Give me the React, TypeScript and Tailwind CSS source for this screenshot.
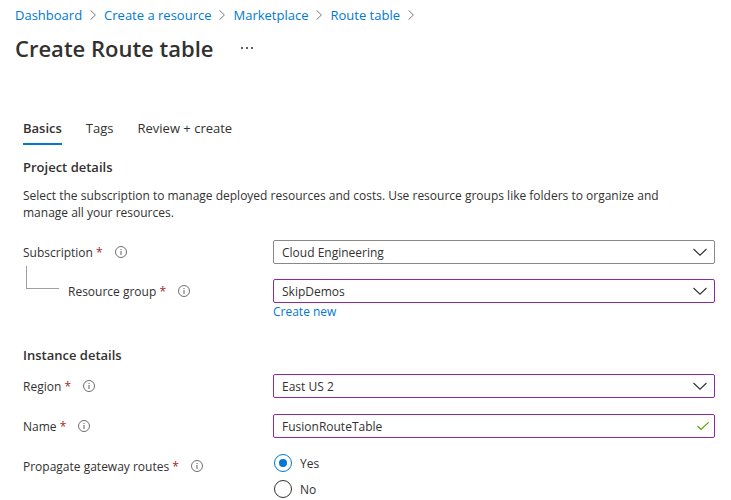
import React, { useState } from "react";

const crumbs = ["Dashboard", "Create a resource", "Marketplace", "Route table"];
const tabs = ["Basics", "Tags", "Review + create"];

function InfoIcon() {
  return (
    <svg className="size-3 shrink-0" viewBox="0 0 12 12" fill="none" stroke="#605e5c" aria-hidden="true">
      <circle cx="6" cy="6" r="5.5" strokeWidth="0.9" />
      <path d="M6 5v4M6 3v1" strokeWidth="1" />
    </svg>
  );
}

function Label({ text, htmlFor, id }: { text: string; htmlFor?: string; id?: string }) {
  const content = (
    <>
      {text} <span className="text-[#a4262c]">*</span>
    </>
  );
  return (
    <div className="flex h-6 items-center gap-3">
      {htmlFor ? <label htmlFor={htmlFor}>{content}</label> : <span id={id}>{content}</span>}
      <InfoIcon />
    </div>
  );
}

function Row({ children }: { children: React.ReactNode }) {
  return <div className="grid grid-cols-[250px_minmax(0,1fr)] items-start">{children}</div>;
}

function Select({ id, value, changed }: { id: string; value: string; changed?: boolean }) {
  return (
    <div className="relative">
      <select
        id={id}
        defaultValue={value}
        className={
          "block h-6 w-full appearance-none rounded-xs border bg-white pt-px pr-8 pl-2 leading-5 outline-none " +
          (changed ? "border-[#8a2da5]" : "border-[#8a8886]")
        }
      >
        <option>{value}</option>
      </select>
      <svg
        className="pointer-events-none absolute top-2 right-2 h-2 w-3.5"
        viewBox="0 0 14 8"
        fill="none"
        stroke="#323130"
        aria-hidden="true"
      >
        <path d="M0.5 1L7 7.2L13.5 1" strokeWidth="1.1" />
      </svg>
    </div>
  );
}

export default function App() {
  const [route, setRoute] = useState("Yes");
  return (
    <main className="bg-white pt-[5px] font-['Open_Sans','Noto_Sans',sans-serif] text-[12px] leading-[17px] text-[#323130]">
      <nav aria-label="Breadcrumb" className="flex h-5 items-center gap-2 px-[15px] text-[13px]">
        {crumbs.map((c) => (
          <React.Fragment key={c}>
            <a href="#" className="text-[#0078d4]">
              {c}
            </a>
            <svg className="h-2.5 w-1.5" viewBox="0 0 6 10" fill="none" stroke="#797775" aria-hidden="true">
              <path d="M0.5 0.3L5.4 5L0.5 9.7" strokeWidth="1" />
            </svg>
          </React.Fragment>
        ))}
      </nav>
      <header className="mt-[7px] flex h-8 items-center gap-7 px-[15px]">
        <h1 className="text-[22px] leading-8 font-semibold">Create Route table</h1>
        <button type="button" aria-label="More actions">
          <svg className="h-0.5 w-3" viewBox="0 0 12 2" fill="#605e5c" aria-hidden="true">
            <path d="M0 0h2v2h-2zM5 0h2v2h-2zM10 0h2v2h-2z" />
          </svg>
        </button>
      </header>

      <div className="pt-[49px] pr-4 pl-[23px]">
        <div role="tablist" className="flex h-8 gap-6 text-[13px]">
          {tabs.map((t, i) => (
            <button
              key={t}
              type="button"
              role="tab"
              aria-selected={i === 0}
              className={
                "border-b-2 " + (i === 0 ? "border-[#0078d4] font-semibold" : "border-transparent")
              }
            >
              {t}
            </button>
          ))}
        </div>

        <h2 className="mt-3 text-[13px] leading-5 font-semibold">Project details</h2>
        <p className="mt-2.5 pr-6">
          Select the subscription to manage deployed resources and costs. Use resource groups like folders to organize
          and manage all your resources.
        </p>

        <div className="mt-[19px]">
          <Row>
            <Label text="Subscription" htmlFor="subscription" />
            <Select id="subscription" value="Cloud Engineering" />
          </Row>
          <Row>
            <div className="flex">
              <div className="mt-0.5 mr-[9px] ml-[3px] h-[23px] w-[33px] border-b border-l border-[#a19f9d]" />
              <div className="mt-[15px]">
                <Label text="Resource group" htmlFor="group" />
              </div>
            </div>
            <div className="mt-[15px]">
              <Select id="group" value="SkipDemos" changed />
              <a href="#" className="inline-block leading-[18px] text-[#0078d4]">
                Create new
              </a>
            </div>
          </Row>
        </div>

        <h2 className="mt-6 text-[13px] leading-5 font-semibold">Instance details</h2>
        <div className="mt-[9px] flex flex-col gap-4">
          <Row>
            <Label text="Region" htmlFor="region" />
            <Select id="region" value="East US 2" changed />
          </Row>
          <Row>
            <Label text="Name" htmlFor="name" />
            <div className="relative">
              <input
                id="name"
                type="text"
                defaultValue="FusionRouteTable"
                className="block h-6 w-full rounded-xs border border-[#8a2da5] bg-white pr-8 pl-2 outline-none"
              />
              <svg
                className="pointer-events-none absolute top-2 right-1.5 h-2 w-3"
                viewBox="0 0 12 8"
                fill="none"
                stroke="#57a300"
                aria-hidden="true"
              >
                <path d="M0.4 4L4 7.4L11.6 0.4" strokeWidth="1.2" />
              </svg>
            </div>
          </Row>
          <Row>
            <Label text="Propagate gateway routes" id="propagate" />
            <div role="radiogroup" aria-labelledby="propagate" className="flex flex-col items-start gap-2">
              {["Yes", "No"].map((o) => (
                <label key={o} className="flex h-[18px] items-center gap-2 pl-px">
                  <input
                    type="radio"
                    name="propagate"
                    checked={route === o}
                    onChange={() => setRoute(o)}
                    className="grid size-[18px] appearance-none place-content-center rounded-full border border-[#323130] bg-white before:size-2 before:rounded-full checked:border-[#0078d4] checked:before:bg-[#0078d4]"
                  />
                  {o}
                </label>
              ))}
            </div>
          </Row>
        </div>
      </div>
    </main>
  );
}
